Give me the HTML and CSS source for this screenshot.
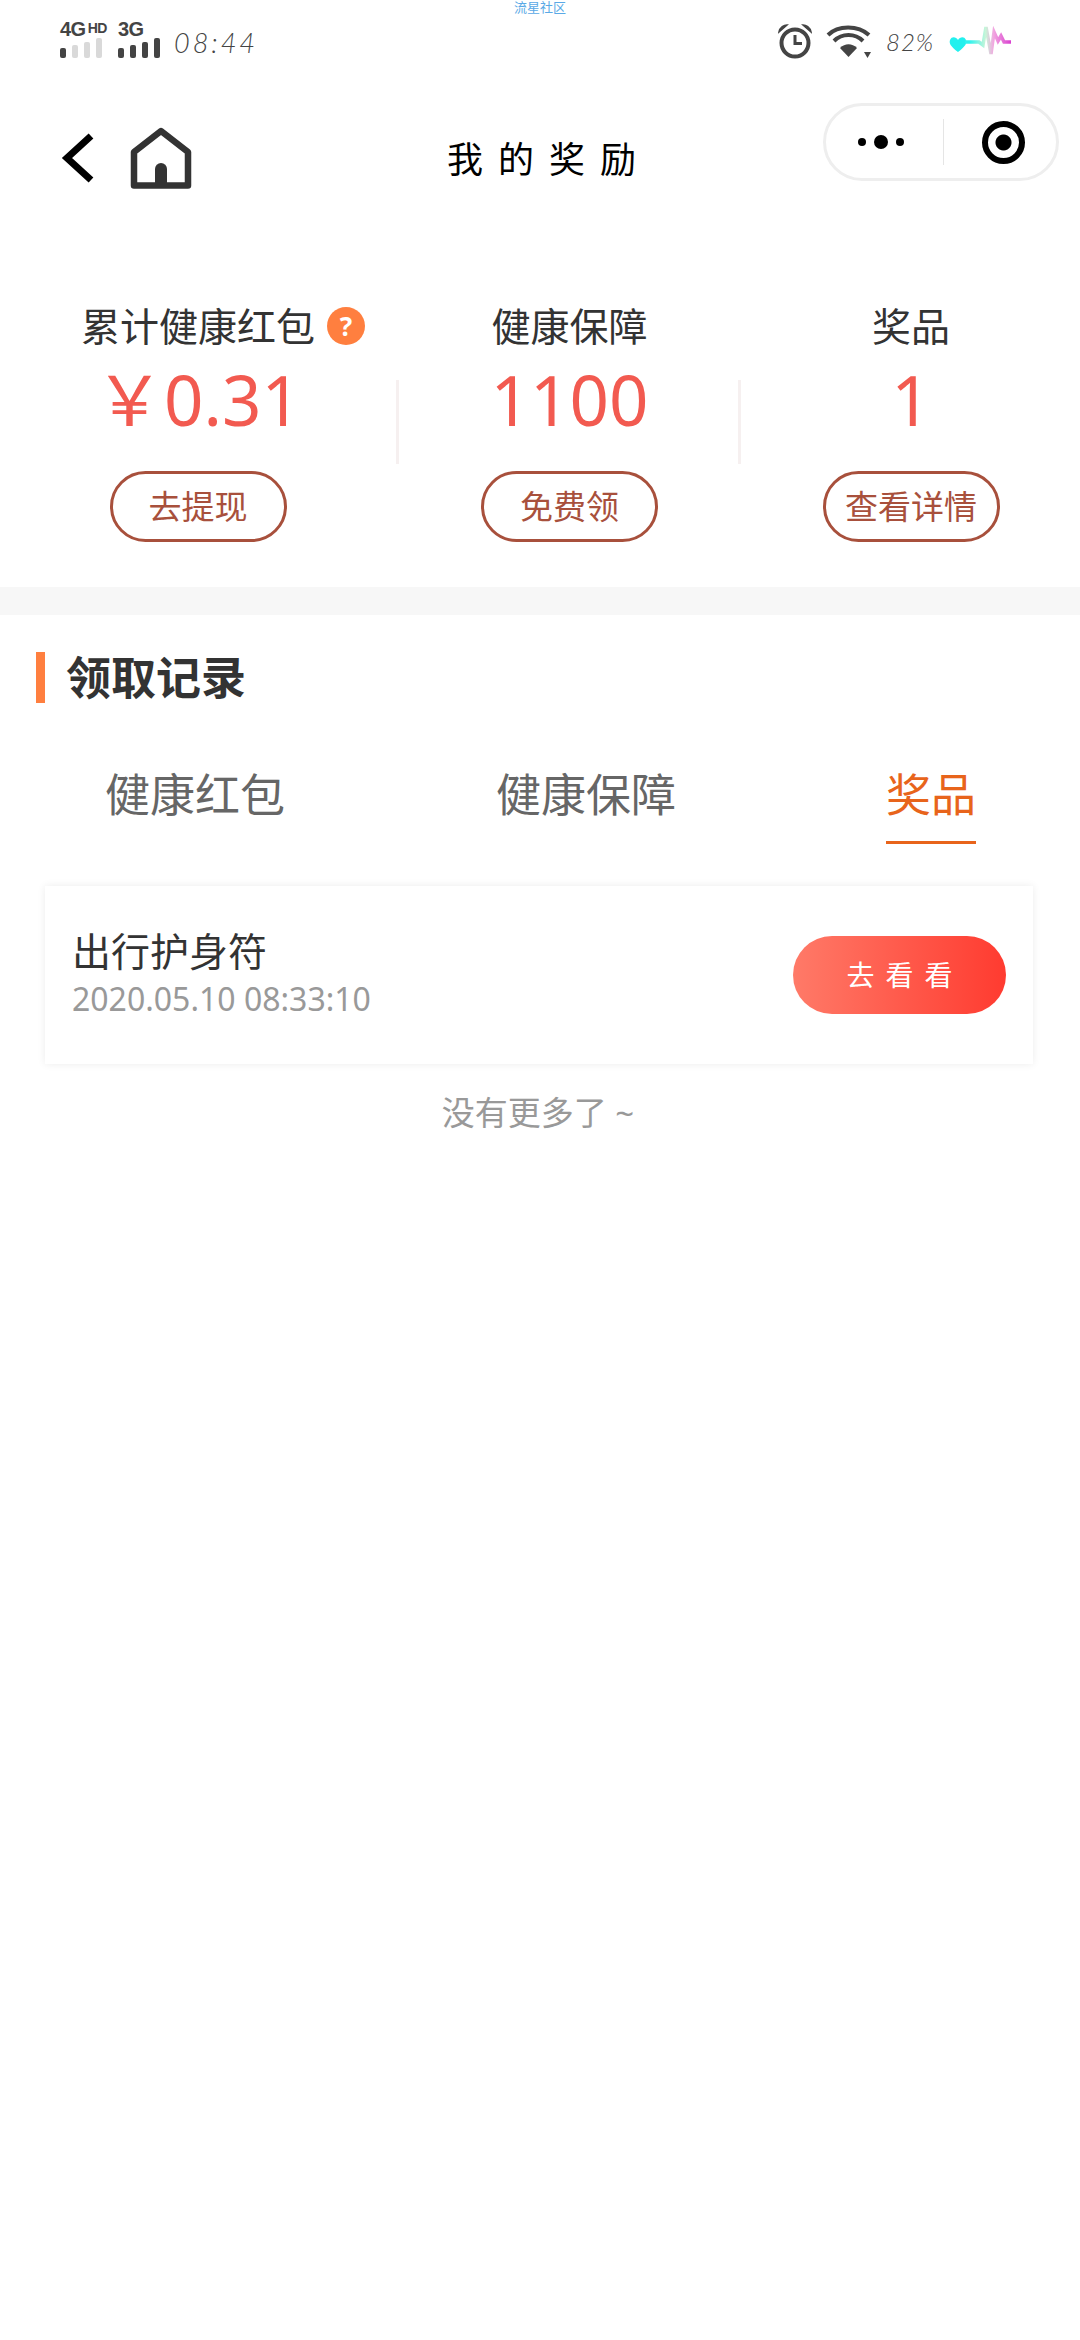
FILE: index.html
```html
<!DOCTYPE html>
<html lang="zh-CN">

<head>
    <meta charset="UTF-8">
    <meta name="viewport" content="width=device-width, initial-scale=1.0">
    <title>我的奖励</title>

    <link rel="stylesheet" href="styles.css">
</head>

<body>
    <div class="top-note">流星社区</div>

    <!-- 狀態列 -->
    <div class="status">
        <div class="signal">
            <div class="signal-name">4G<small>HD</small></div>
            <div class="bars">
                <i class="b1"></i><i class="b2 off"></i><i class="b3 off"></i><i class="b4 off"></i>
            </div>
        </div>
        <div class="signal signal-3g">
            <div class="signal-name">3G</div>
            <div class="bars">
                <i class="b1"></i><i class="b2"></i><i class="b3"></i><i class="b4"></i>
            </div>
        </div>
        <span class="clock">08:44</span>

        <div class="status-right">
            <svg class="alarm" width="36" height="36" viewBox="0 0 36 36">
                <circle cx="18" cy="20" r="13.5" fill="none" stroke="#444" stroke-width="4" />
                <path d="M18 12v8.500h7" fill="none" stroke="#444" stroke-width="3" />
                <path d="M2 9 C3 4 7 2 10 2 Z M34 9 C33 4 29 2 26 2 Z" fill="#444" stroke="#444" stroke-width="1.500" />
            </svg>
            <svg class="wifi" width="46" height="34" viewBox="0 0 46 34">
                <path d="M2 11 C12 1 32 1 43 11" fill="none" stroke="#444" stroke-width="4" />
                <path d="M8 17 C16 9 29 9 37 17" fill="none" stroke="#444" stroke-width="4" />
                <path d="M14 24 C19 19 26 19 31 24 L22.500 33 Z" fill="#444" />
                <path d="M38 28h7l-3.500 6z" fill="#444" />
            </svg>
            <span class="battery">82%</span>
            <svg class="pulse" width="64" height="34" viewBox="0 0 64 34">
                <defs>
                    <linearGradient id="pulse-line" x1="0" y1="0" x2="1" y2="0">
                        <stop offset="0.100" stop-color="#2ff3ee" />
                        <stop offset="0.450" stop-color="#c9f5d8" />
                        <stop offset="0.620" stop-color="#f2a6e0" />
                        <stop offset="1" stop-color="#d93fd0" />
                    </linearGradient>
                </defs>
                <path d="M9 28 C1 22 0 19 1 16 C3 12 7 13 9 16 C11 13 15 12 17 16 C18 19 17 22 9 28 Z" fill="#22f0ee" />
                <path d="M16 18 H30 L34 21 L37 3 L42 30 L45 8 L49 17 L52 12 L55 18 H62" fill="none" stroke="url(#pulse-line)" stroke-width="3.500" />
            </svg>
        </div>
    </div>

    <!-- 導覽列 -->
    <div class="nav">
        <svg class="back" width="34" height="50" viewBox="0 0 34 50">
            <path d="M30 3 L6 25 L30 47" fill="none" stroke="#000" stroke-width="7" />
        </svg>
        <svg class="home" width="62" height="62" viewBox="0 0 62 62">
            <path d="M4 58.500 V25 L31 4 L58 25 V58.500 Z" fill="none" stroke="#333" stroke-width="6.500" stroke-linejoin="round" />
            <path d="M25 59 V42 a6 6 0 0 1 12 0 V59 Z" fill="#333" />
        </svg>
        <h1 class="nav-title">我的奖励</h1>
        <div class="capsule">
            <div class="dots"><i></i><i class="big"></i><i></i></div>
            <div class="capsule-line"></div>
            <div class="target"></div>
        </div>
    </div>

    <!-- 統計 -->
    <div class="stats">
        <div class="stat stat-1">
            <div class="stat-label">累计健康红包<span class="help">?</span></div>
            <div class="stat-num">￥0.31</div>
            <a class="stat-btn">去提现</a>
        </div>
        <div class="stat-line"></div>
        <div class="stat stat-2">
            <div class="stat-label">健康保障</div>
            <div class="stat-num">1100</div>
            <a class="stat-btn">免费领</a>
        </div>
        <div class="stat-line"></div>
        <div class="stat stat-3">
            <div class="stat-label">奖品</div>
            <div class="stat-num">1</div>
            <a class="stat-btn">查看详情</a>
        </div>
    </div>

    <div class="band"></div>

    <h2 class="section-title">领取记录</h2>

    <ul class="tabs">
        <li class="tab tab-1">健康红包</li>
        <li class="tab tab-2">健康保障</li>
        <li class="tab tab-3 active">奖品</li>
    </ul>

    <div class="card">
        <div>
            <div class="card-name">出行护身符</div>
            <div class="card-time">2020.05.10 08:33:10</div>
        </div>
        <a class="card-btn">去看看</a>
    </div>

    <p class="no-more">没有更多了 ~</p>
</body>

</html>
```

FILE: styles.css
```css
* {
    box-sizing: border-box;
    margin: 0;
    padding: 0;
    list-style: none;
}

html,
body {
    background: #fff;
}

body {
    position: relative;
    width: 1080px;
    height: 2340px;
    overflow: hidden;
    font-family: "Noto Sans", "Noto Sans CJK SC", sans-serif;
    color: #333;
}

/* 最上面的小字，壓在狀態列上 */
.top-note {
    position: absolute;
    top: 0;
    left: 0;
    width: 100%;
    text-align: center;
    font-size: 13px;
    line-height: 14px;
    color: #5aa9e6;
}

/* 狀態列 */
.status {
    display: flex;
    align-items: flex-start;
    height: 80px;
    padding: 20px 0 0 60px;
    color: #444;
}

.signal {
    width: 58px;
}

.signal-3g {
    width: 56px;
}

.signal-name {
    height: 18px;
    font-family: "Liberation Sans", sans-serif;
    font-weight: 700;
    font-size: 20px;
    line-height: 18px;
    letter-spacing: -0.5px;
}

.signal-name small {
    position: relative;
    top: -3px;
    margin-left: 2px;
    font-size: 14px;
}

.bars {
    display: flex;
    align-items: flex-end;
    gap: 6px;
    height: 20px;
}

.bars i {
    display: block;
    width: 6px;
    border-radius: 2px;
    background: #444;
}

.bars i.off {
    background: #d9d9d9;
}

.bars .b1 {
    height: 10px;
}

.bars .b2 {
    height: 13px;
}

.bars .b3 {
    height: 16px;
}

.bars .b4 {
    height: 20px;
}

.clock {
    margin: 8px 0 0 0;
    font-family: "Lato", sans-serif;
    font-weight: 300;
    font-style: italic;
    font-size: 27px;
    line-height: 30px;
    letter-spacing: 3px;
}

.status-right {
    display: flex;
    align-items: center;
    margin-left: auto;
    padding-right: 67px;
    height: 42px;
}

.wifi {
    margin-left: 13px;
}

.battery {
    width: 63px;
    margin-left: 14px;
    font-family: "Lato", sans-serif;
    font-weight: 300;
    font-style: italic;
    font-size: 24px;
    letter-spacing: 1px;
}

/* 導覽列 */
.nav {
    display: flex;
    align-items: center;
    height: 112px;
    padding-left: 61px;
}

.back {
    margin-top: 44px;
}

.home {
    margin: 44px 0 0 35px;
}

.nav-title {
    width: 240px;
    margin: 42px 0 0 255px;
    font-weight: 400;
    font-size: 36px;
    letter-spacing: 15px;
    color: #000;
}

.capsule {
    display: flex;
    align-items: center;
    width: 236px;
    height: 78px;
    margin: 12px 21px 0 auto;
    border: 3px solid #eee;
    border-radius: 39px;
    background: #fff;
}

.dots {
    display: flex;
    align-items: center;
    gap: 8px;
    margin-left: 32px;
}

.dots i {
    display: block;
    width: 8px;
    height: 8px;
    border-radius: 50%;
    background: #000;
}

.dots i.big {
    width: 14px;
    height: 14px;
}

.capsule-line {
    width: 1px;
    height: 46px;
    margin-left: 39px;
    background: #e5e5e5;
}

.target {
    width: 43px;
    height: 43px;
    margin-left: 38px;
    border: 6px solid #000;
    border-radius: 50%;
    background: radial-gradient(circle, #000 0, #000 7.500px, #fff 8.500px);
}

/* 統計 */
.stats {
    display: flex;
    height: 395px;
    padding-top: 108px;
}

.stat {
    display: flex;
    flex-direction: column;
    align-items: center;
}

.stat-1 {
    width: 396px;
}

.stat-2 {
    width: 339px;
    padding-left: 2px;
}

.stat-3 {
    width: 339px;
    padding-left: 1px;
}

.stat-line {
    width: 3px;
    height: 84px;
    margin-top: 80px;
    background: #f6f0f0;
}

.stat-label {
    position: relative;
    font-size: 39px;
    line-height: 52px;
    color: #333;
}

.help {
    position: absolute;
    left: calc(100% + 12px);
    top: 7px;
    width: 38px;
    height: 38px;
    border-radius: 50%;
    background: #ff7f3f;
    color: #fff;
    text-align: center;
    font-weight: 700;
    font-size: 26px;
    line-height: 38px;
}

.stat-num {
    height: 94px;
    font-size: 69px;
    line-height: 94px;
    color: #f25a50;
}

.stat-btn {
    display: block;
    width: 177px;
    height: 71px;
    margin-top: 25px;
    border: 3px solid #a8503c;
    border-radius: 36px;
    text-align: center;
    font-size: 33px;
    line-height: 65px;
    color: #a8503c;
}

.band {
    height: 28px;
    background: #f7f7f7;
}

.section-title {
    height: 51px;
    margin: 37px 0 0 36px;
    padding-left: 21px;
    border-left: 9px solid #ff7f3f;
    font-size: 45px;
    line-height: 51px;
    font-weight: 700;
    color: #333;
}

/* 分頁 */
.tabs {
    display: flex;
    height: 81px;
    margin-top: 60px;
}

.tab {
    height: 81px;
    font-size: 45px;
    line-height: 64px;
    color: #666;
}

.tab-1 {
    margin-left: 105px;
}

.tab-2 {
    margin-left: 211px;
}

.tab-3 {
    margin-left: 210px;
}

.tab.active {
    border-bottom: 3px solid #e8641b;
    color: #e8641b;
}

/* 卡片 */
.card {
    display: flex;
    justify-content: space-between;
    align-items: center;
    width: 988px;
    height: 178px;
    margin: 42px 0 0 45px;
    padding: 0 27px;
    background: #fff;
    box-shadow: 0 0 8px rgba(0, 0, 0, 0.08);
}

.card-name {
    font-size: 39px;
    line-height: 48px;
    color: #333;
}

.card-time {
    font-size: 32px;
    line-height: 48px;
    color: #999;
}

.card-btn {
    width: 213px;
    height: 78px;
    border-radius: 39px;
    background: linear-gradient(to right, #ff7a68, #ff3b30);
    text-align: center;
    text-indent: 11px;
    font-size: 28px;
    line-height: 78px;
    letter-spacing: 11px;
    color: #fff;
}

.no-more {
    margin-top: 27px;
    padding-right: 4px;
    text-align: center;
    font-size: 33px;
    line-height: 44px;
    color: #999;
}
```
